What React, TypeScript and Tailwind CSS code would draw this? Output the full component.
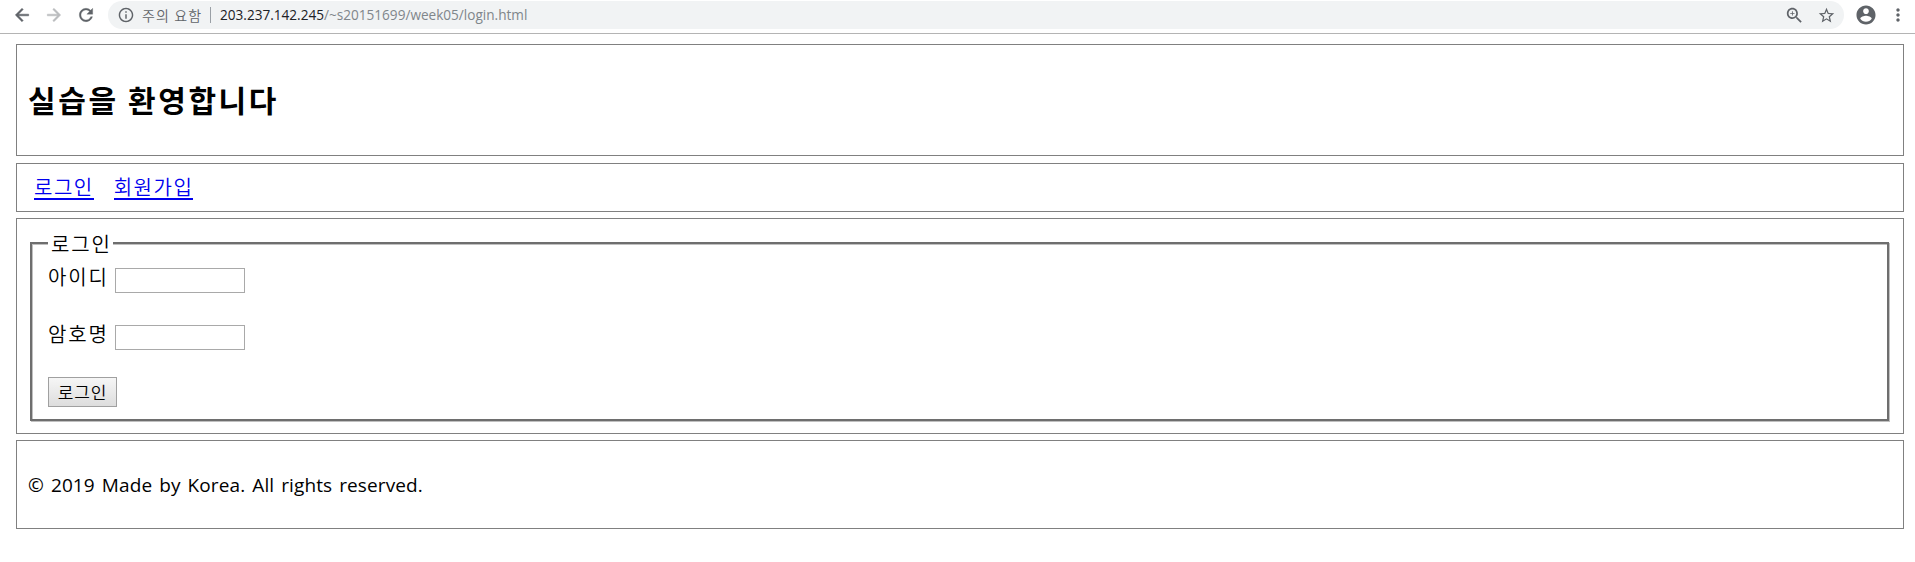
import React from "react";

const KR = "font-['Noto_Sans_CJK_KR',sans-serif]";

function Toolbar() {
  return (
    <header className="flex h-[34px] items-start border-b border-[#b4b4b4] bg-white pt-px text-[#5f6368]">
      <div className="flex h-7 w-[108px] shrink-0 items-center gap-3 pl-[12px]">
        <svg width="20" height="20" viewBox="0 0 24 24" fill="currentColor" stroke="currentColor" strokeWidth="0.6">
          <path d="M20 11H7.83l5.59-5.59L12 4l-8 8 8 8 1.41-1.41L7.83 13H20v-2z" />
        </svg>
        <svg width="20" height="20" viewBox="0 0 24 24" fill="#babcbe" stroke="#babcbe" strokeWidth="0.6">
          <path d="M12 4l-1.41 1.41L16.17 11H4v2h12.17l-5.58 5.59L12 20l8-8z" />
        </svg>
        <svg width="20" height="20" viewBox="0 0 24 24" fill="currentColor" stroke="currentColor" strokeWidth="0.4">
          <path d="M17.65 6.35C16.2 4.9 14.21 4 12 4c-4.42 0-7.99 3.58-7.99 8s3.57 8 7.99 8c3.73 0 6.84-2.55 7.73-6h-2.08c-.82 2.33-3.04 4-5.65 4-3.31 0-6-2.69-6-6s2.69-6 6-6c1.66 0 3.14.69 4.22 1.78L13 11h7V4l-2.35 2.35z" />
        </svg>
      </div>
      <div className="flex h-7 w-[1736px] shrink-0 items-center rounded-full bg-[#f1f3f4] pl-[10px] pr-[9px]">
        <svg width="16" height="16" viewBox="1 1 22 22" fill="currentColor">
          <path d="M11 7h2v2h-2zm0 4h2v6h-2zm1-9C6.48 2 2 6.48 2 12s4.48 10 10 10 10-4.48 10-10S17.52 2 12 2zm0 18c-4.41 0-8-3.59-8-8s3.59-8 8-8 8 3.59 8 8-3.59 8-8 8z" />
        </svg>
        <span className={`ml-2 w-[68px] whitespace-nowrap text-[14px] font-[350] leading-7 tracking-[1.1px] ${KR}`}>
          주의 요함
        </span>
        <span className="h-4 w-px bg-[#9aa0a6]" />
        <span className="ml-[9px] whitespace-nowrap font-['Open_Sans',sans-serif] text-[13.6px] leading-7 text-[#80868b]">
          <span className="text-[#202124]">203.237.142.245</span>/~s20151699/week05/login.html
        </span>
        <div className="ml-auto flex items-center gap-[15px]">
          <svg width="17" height="17" viewBox="2 2 20 20" fill="currentColor">
            <path d="M15.5 14h-.79l-.28-.27C15.41 12.59 16 11.11 16 9.5 16 5.91 13.09 3 9.5 3S3 5.91 3 9.5 5.91 16 9.5 16c1.61 0 3.09-.59 4.23-1.57l.27.28v.79l5 4.99L20.49 19l-4.99-5zm-6 0C7.01 14 5 11.99 5 9.5S7.01 5 9.5 5 14 7.01 14 9.5 11.99 14 9.5 14zm.5-7H9v2H7v1h2v2h1v-2h2V9h-2z" />
          </svg>
          <svg width="17" height="17" viewBox="1 1 22 22" fill="currentColor">
            <path d="M22 9.24l-7.19-.62L12 2 9.19 8.63 2 9.24l5.46 4.73L5.82 21 12 17.27 18.18 21l-1.63-7.03L22 9.24zM12 15.4l-3.76 2.27 1-4.28-3.32-2.88 4.38-.38L12 6.1l1.71 4.04 4.38.38-3.32 2.88 1 4.28L12 15.4z" />
          </svg>
        </div>
      </div>
      <div className="flex h-7 items-center">
        <svg className="ml-3" width="20" height="20" viewBox="1.5 1.5 21 21" fill="currentColor">
          <path d="M12 2C6.48 2 2 6.48 2 12s4.48 10 10 10 10-4.48 10-10S17.52 2 12 2zm0 3c1.66 0 3 1.34 3 3s-1.34 3-3 3-3-1.34-3-3 1.34-3 3-3zm0 14.2c-2.5 0-4.71-1.28-6-3.22.03-1.99 4-3.08 6-3.08 1.99 0 5.97 1.09 6 3.08-1.29 1.94-3.5 3.22-6 3.22z" />
        </svg>
        <svg className="ml-3" width="20" height="20" viewBox="0 0 24 24" fill="currentColor">
          <path d="M12 8c1.1 0 2-.9 2-2s-.9-2-2-2-2 .9-2 2 .9 2 2 2zm0 2c-1.1 0-2 .9-2 2s.9 2 2 2 2-.9 2-2-.9-2-2-2zm0 6c-1.1 0-2 .9-2 2s.9 2 2 2 2-.9 2-2-.9-2-2-2z" />
        </svg>
      </div>
    </header>
  );
}

function Field({ label, type }: { label: string; type: string }) {
  return (
    <label className="flex h-[25px] items-center">
      <span className="-mt-[8px] w-[67px] leading-[25px]">{label}</span>
      <input type={type} className="h-[25px] w-[130px] border border-[#a9a9a9] bg-white px-1 text-base outline-none" />
    </label>
  );
}

export default function App() {
  return (
    <div className="h-[562px] overflow-hidden bg-white text-black">
      <Toolbar />
      <div className={`ml-4 mt-[10px] w-[1888px] text-[20px] font-[350] tracking-[1.9px] ${KR}`}>
        <div className="flex h-[112px] items-center border border-[#808080] pb-[2px] pl-[11px]">
          <h1 className="whitespace-nowrap text-[30px] font-bold leading-10 tracking-[2.6px]">실습을 환영합니다</h1>
        </div>
        <nav className="mt-[7px] flex h-[49px] items-center gap-5 border border-[#808080] pl-[17px] tracking-[1.5px] text-[#0000ee]">
          <a href="#" className="border-b-2 border-[#0000ee] leading-[22px]">로그인</a>
          <a href="#" className="border-b-2 border-[#0000ee] leading-[22px]">회원가입</a>
        </nav>
        <main className="mt-[6px] h-[216px] border border-[#808080] pl-[13px] pt-[23px]">
          <form
            className="h-[179px] w-[1859px] border-2 border-[#6e6e6e] pl-4 shadow-[1px_1px_0_#c0c0c0,inset_1px_1px_0_#c0c0c0]"
            onSubmit={(e) => e.preventDefault()}
          >
            <div className="-mt-[14px] h-[26px] w-[65px] bg-white pl-[3px] leading-[27px]">로그인</div>
            <div className="mt-[12px]">
              <Field label="아이디" type="text" />
            </div>
            <div className="mt-8">
              <Field label="암호명" type="password" />
            </div>
            <button className="mt-[27px] flex h-[30px] w-[69px] items-center justify-center border border-[#a0a0a0] bg-linear-to-b from-[#f6f6f6] to-[#dddddd] pb-px text-[17px] tracking-[0.9px]">
              로그인
            </button>
          </form>
        </main>
        <footer className="mt-[6px] flex h-[89px] items-center border border-[#808080] pl-[11px] pt-[2px]">
          <p className="whitespace-nowrap font-['Open_Sans',sans-serif] text-[19px] font-normal tracking-[0.1px] [word-spacing:2px]">
            © 2019 Made by Korea. All rights reserved.
          </p>
        </footer>
      </div>
    </div>
  );
}
